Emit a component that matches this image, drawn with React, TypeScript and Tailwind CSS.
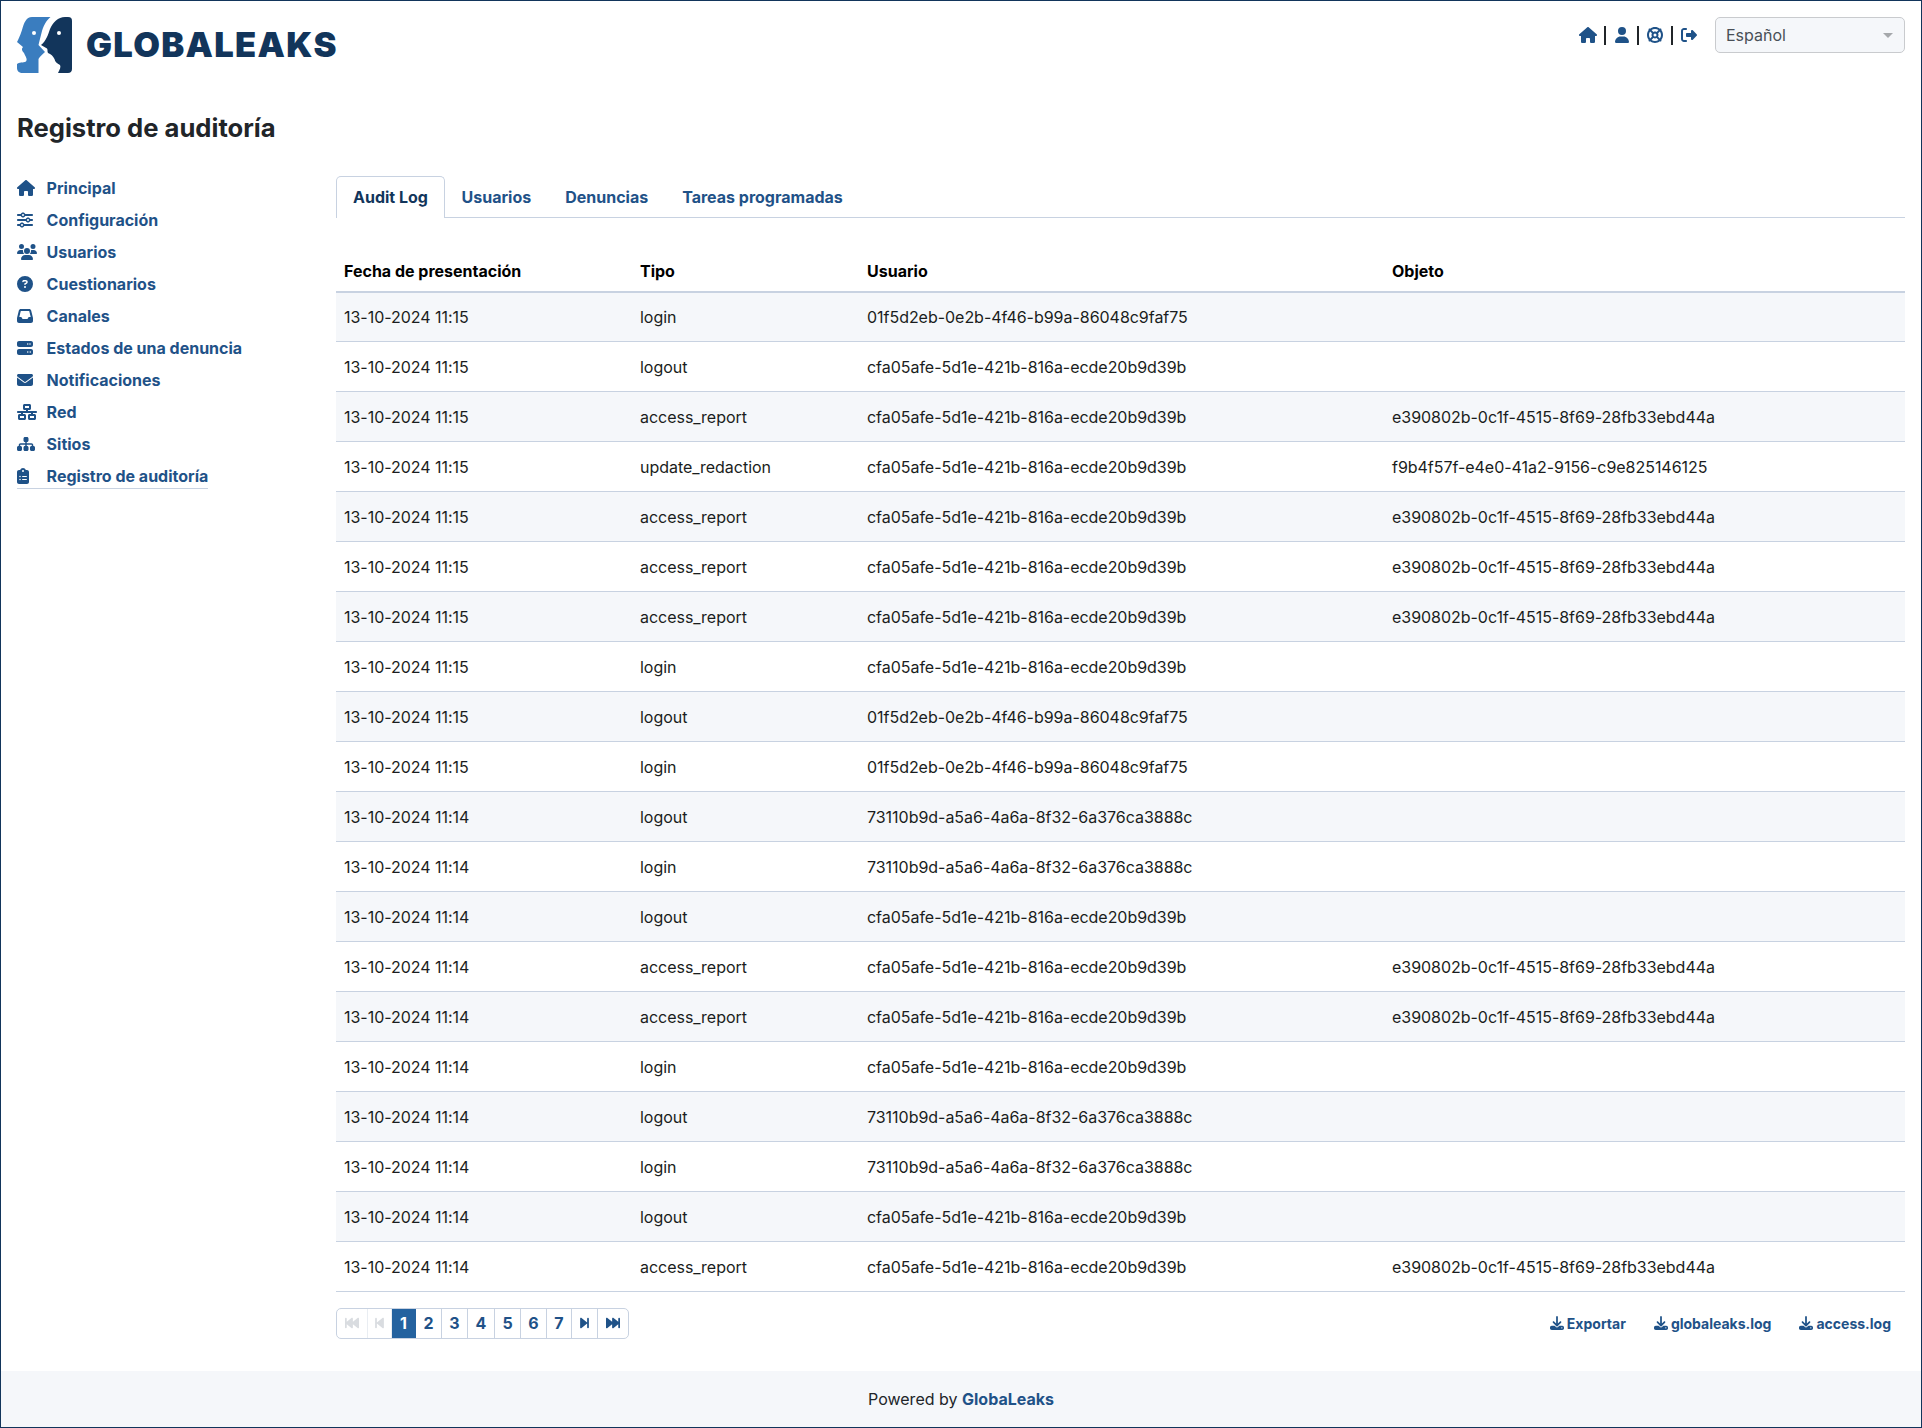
import React from "react";
import {
  FaHouse, FaUser, FaLifeRing, FaSliders, FaUsers, FaCircleQuestion, FaInbox, FaServer, FaEnvelope,
  FaNetworkWired, FaSitemap, FaClipboardList, FaBackwardFast, FaBackwardStep, FaForwardStep, FaForwardFast, FaDownload,
  FaRightFromBracket,
} from "react-icons/fa6";

const A = "01f5d2eb-0e2b-4f46-b99a-86048c9faf75";
const B = "cfa05afe-5d1e-421b-816a-ecde20b9d39b";
const C = "73110b9d-a5a6-4a6a-8f32-6a376ca3888c";
const O = "e390802b-0c1f-4515-8f69-28fb33ebd44a";
const P = "f9b4f57f-e4e0-41a2-9156-c9e825146125";

const rows: [string, string, string, string][] = [
  ["11:15", "login", A, ""],
  ["11:15", "logout", B, ""],
  ["11:15", "access_report", B, O],
  ["11:15", "update_redaction", B, P],
  ["11:15", "access_report", B, O],
  ["11:15", "access_report", B, O],
  ["11:15", "access_report", B, O],
  ["11:15", "login", B, ""],
  ["11:15", "logout", A, ""],
  ["11:15", "login", A, ""],
  ["11:14", "logout", C, ""],
  ["11:14", "login", C, ""],
  ["11:14", "logout", B, ""],
  ["11:14", "access_report", B, O],
  ["11:14", "access_report", B, O],
  ["11:14", "login", B, ""],
  ["11:14", "logout", C, ""],
  ["11:14", "login", C, ""],
  ["11:14", "logout", B, ""],
  ["11:14", "access_report", B, O],
];

const nav = [
  { label: "Principal", Icon: FaHouse, w: "w-[18px]" },
  { label: "Configuración", Icon: FaSliders, w: "w-4" },
  { label: "Usuarios", Icon: FaUsers, w: "w-5" },
  { label: "Cuestionarios", Icon: FaCircleQuestion, w: "w-4" },
  { label: "Canales", Icon: FaInbox, w: "w-4" },
  { label: "Estados de una denuncia", Icon: FaServer, w: "w-4" },
  { label: "Notificaciones", Icon: FaEnvelope, w: "w-4" },
  { label: "Red", Icon: FaNetworkWired, w: "w-5" },
  { label: "Sitios", Icon: FaSitemap, w: "w-[18px]" },
  { label: "Registro de auditoría", Icon: FaClipboardList, w: "w-3" },
];

function Logo() {
  return (
    <svg width="56" height="56" viewBox="0 0 56 56" className="shrink-0">
      <path fill="#3a7dbf" d="M15 0H33.5C29 4 27 8 25 14C24 18 23 22 21.5 28L28 35C26 37 23 39 21.5 42V56H6C2 56 0 54 0 51V47C2 45 6 46 9 44.5C11 42 8 39 7 36C5 34 4 32 6 30L0 25C1 23 3 19 5 13C7 6 9 0 15 0Z" />
      <circle cx="17" cy="16" r="2" fill="#fff" />
      <path fill="#12355b" d="M48 0H51C54 0 55 1.5 55 4V52C55 54.5 53.5 56 51 56H41C43 52 44 50 43 48C40 46 38 45 37.5 42C36 39 34 37 31 36C30 34 31 33 30 31.5L24 28C29 24 31 18 33 12C36 5 41 0 48 0Z" />
      <circle cx="42" cy="16" r="2" fill="#fff" />
    </svg>
  );
}

function PageBtn({ children, active, disabled, w }: { children: React.ReactNode; active?: boolean; disabled?: boolean; w: string }) {
  return (
    <span
      className={`${w} flex h-full items-center justify-center border-r font-bold text-[16px] last:border-r-0 ${
        active ? "bg-[#24629f] text-white border-[#24629f]" : disabled ? "border-[#e9edf2] text-[#d9dce0]" : "border-[#c8d2e1] text-[#1f5288]"
      }`}
    >
      {children}
    </span>
  );
}

function DL({ label }: { label: string }) {
  return (
    <a className="flex items-center gap-[3px] text-[14px] font-bold text-[#1f5288]">
      <FaDownload className="h-[14px] w-[14px]" />
      {label}
    </a>
  );
}

export default function App() {
  return (
    <div className="flex h-[1428px] w-[1922px] flex-col border border-[#12355b] bg-white text-[16px] text-[#000] font-['Inter',sans-serif]">
      <header className="flex h-[90px] shrink-0 items-start justify-between pl-4 pr-4 pt-4">
        <div className="flex items-center gap-[13px]">
          <Logo />
          <span className="text-[34.5px] font-black leading-none tracking-[1.3px] text-[#12355b]">GLOBALEAKS</span>
        </div>
        <div className="flex h-[36px] items-center">
          <div className="mr-[18px] flex items-center text-[#1f5288]">
            <FaHouse className="h-4 w-[18px]" />
            <span className="ml-[7px] mr-[9px] h-[19px] w-[2px] bg-[#212529]" />
            <FaUser className="h-4 w-[14px]" />
            <span className="mx-[8px] h-[19px] w-[2px] bg-[#212529]" />
            <FaLifeRing className="h-4 w-4" />
            <span className="mx-[8px] h-[19px] w-[2px] bg-[#212529]" />
            <FaRightFromBracket className="h-4 w-4" />
          </div>
          <div className="flex h-[36px] w-[190px] items-center justify-between rounded-[5px] border border-[#c9cbce] bg-[#f5f7fa] pl-[10px] pr-[11px] text-[#495057]">
            <span>Español</span>
            <span className="h-0 w-0 border-x-[5px] border-t-[5px] border-x-transparent border-t-[#a5a8ab]" />
          </div>
        </div>
      </header>

      <h1 className="h-[81px] pl-4 pt-[21px] text-[25.6px] font-bold leading-[31px] text-[#212529]">Registro de auditoría</h1>

      <div className="flex flex-1 pl-4 pr-4">
        <nav className="w-[319px] shrink-0">
          <ul className="flex flex-col">
            {nav.map(({ label, Icon, w }, i) => (
              <li key={label} className="flex h-[32px] items-start pt-1">
                <a className={`flex items-center font-bold leading-6 text-[#1f5288] ${i === 9 ? "border-b border-[#c8d2e1]" : ""}`}>
                  <span className="flex w-[29.6px] items-center">
                    <Icon className={`h-4 ${w}`} />
                  </span>
                  {label}
                </a>
              </li>
            ))}
          </ul>
        </nav>

        <main className="flex min-w-0 flex-1 flex-col pt-1">
          <div className="flex h-[42px] border-b border-[#c8d2e1] font-bold text-[#1f5288]">
            <span className="flex h-[42px] items-center rounded-t-[5px] border border-b-0 border-[#c8d2e1] bg-white px-[16px] pb-[1px] text-[#12355b]">Audit Log</span>
            <span className="flex items-center pl-[16.6px] pr-[17px]">Usuarios</span>
            <span className="flex items-center px-[17px]">Denuncias</span>
            <span className="flex items-center px-[17px]">Tareas programadas</span>
          </div>

          <table className="mt-[26px] w-full table-fixed border-collapse">
            <colgroup>
              <col className="w-[296px]" />
              <col className="w-[227px]" />
              <col className="w-[525px]" />
              <col />
            </colgroup>
            <thead>
              <tr className="h-[48px] border-b-2 border-[#c8d2e1]">
                {["Fecha de presentación", "Tipo", "Usuario", "Objeto"].map((h) => (
                  <th key={h} className="px-2 pb-2 text-left align-bottom font-bold">{h}</th>
                ))}
              </tr>
            </thead>
            <tbody className="tracking-[-0.03px] text-[#1a1d20]">
              {rows.map((r, i) => (
                <tr key={i} className={`${i === 0 ? "h-[49px]" : "h-[50px]"} border-b border-[#c8d2e1] ${i % 2 === 0 ? "bg-[#f5f7fa]" : "bg-white"}`}>
                  <td className={`px-2 ${i === 0 ? "pt-[1px]" : "pt-[2px]"}`}>13-10-2024 {r[0]}</td>
                  <td className={`px-2 ${i === 0 ? "pt-[1px]" : "pt-[2px]"}`}>{r[1]}</td>
                  <td className={`px-2 ${i === 0 ? "pt-[1px]" : "pt-[2px]"}`}>{r[2]}</td>
                  <td className={`px-2 ${i === 0 ? "pt-[1px]" : "pt-[2px]"}`}>{r[3]}</td>
                </tr>
              ))}
            </tbody>
          </table>

          <div className="mt-[16px] flex items-start justify-between">
            <div className="flex h-[31px] overflow-hidden rounded-[5px] border border-[#c8d2e1]">
              <PageBtn w="w-[31px]" disabled><FaBackwardFast className="h-[14px] w-[14px]" /></PageBtn>
              <PageBtn w="w-[24px]" disabled><FaBackwardStep className="h-[14px] w-[9px]" /></PageBtn>
              <PageBtn w="w-[24px]" active>1</PageBtn>
              <PageBtn w="w-[26px]">2</PageBtn>
              <PageBtn w="w-[26px]">3</PageBtn>
              <PageBtn w="w-[27px]">4</PageBtn>
              <PageBtn w="w-[26px]">5</PageBtn>
              <PageBtn w="w-[26px]">6</PageBtn>
              <PageBtn w="w-[25px]">7</PageBtn>
              <PageBtn w="w-[26px]"><FaForwardStep className="h-[14px] w-[9px]" /></PageBtn>
              <PageBtn w="w-[30px]"><FaForwardFast className="h-[14px] w-[14px]" /></PageBtn>
            </div>
            <div className="flex h-[31px] items-center gap-[28px] pr-[14px]">
              <DL label="Exportar" />
              <DL label="globaleaks.log" />
              <DL label="access.log" />
            </div>
          </div>
        </main>
      </div>

      <footer className="flex h-[56px] shrink-0 items-center justify-center bg-[#f5f7fa] text-[#212529]">
        <span>Powered by <a className="font-bold text-[#1f5288]">GlobaLeaks</a></span>
      </footer>
    </div>
  );
}
